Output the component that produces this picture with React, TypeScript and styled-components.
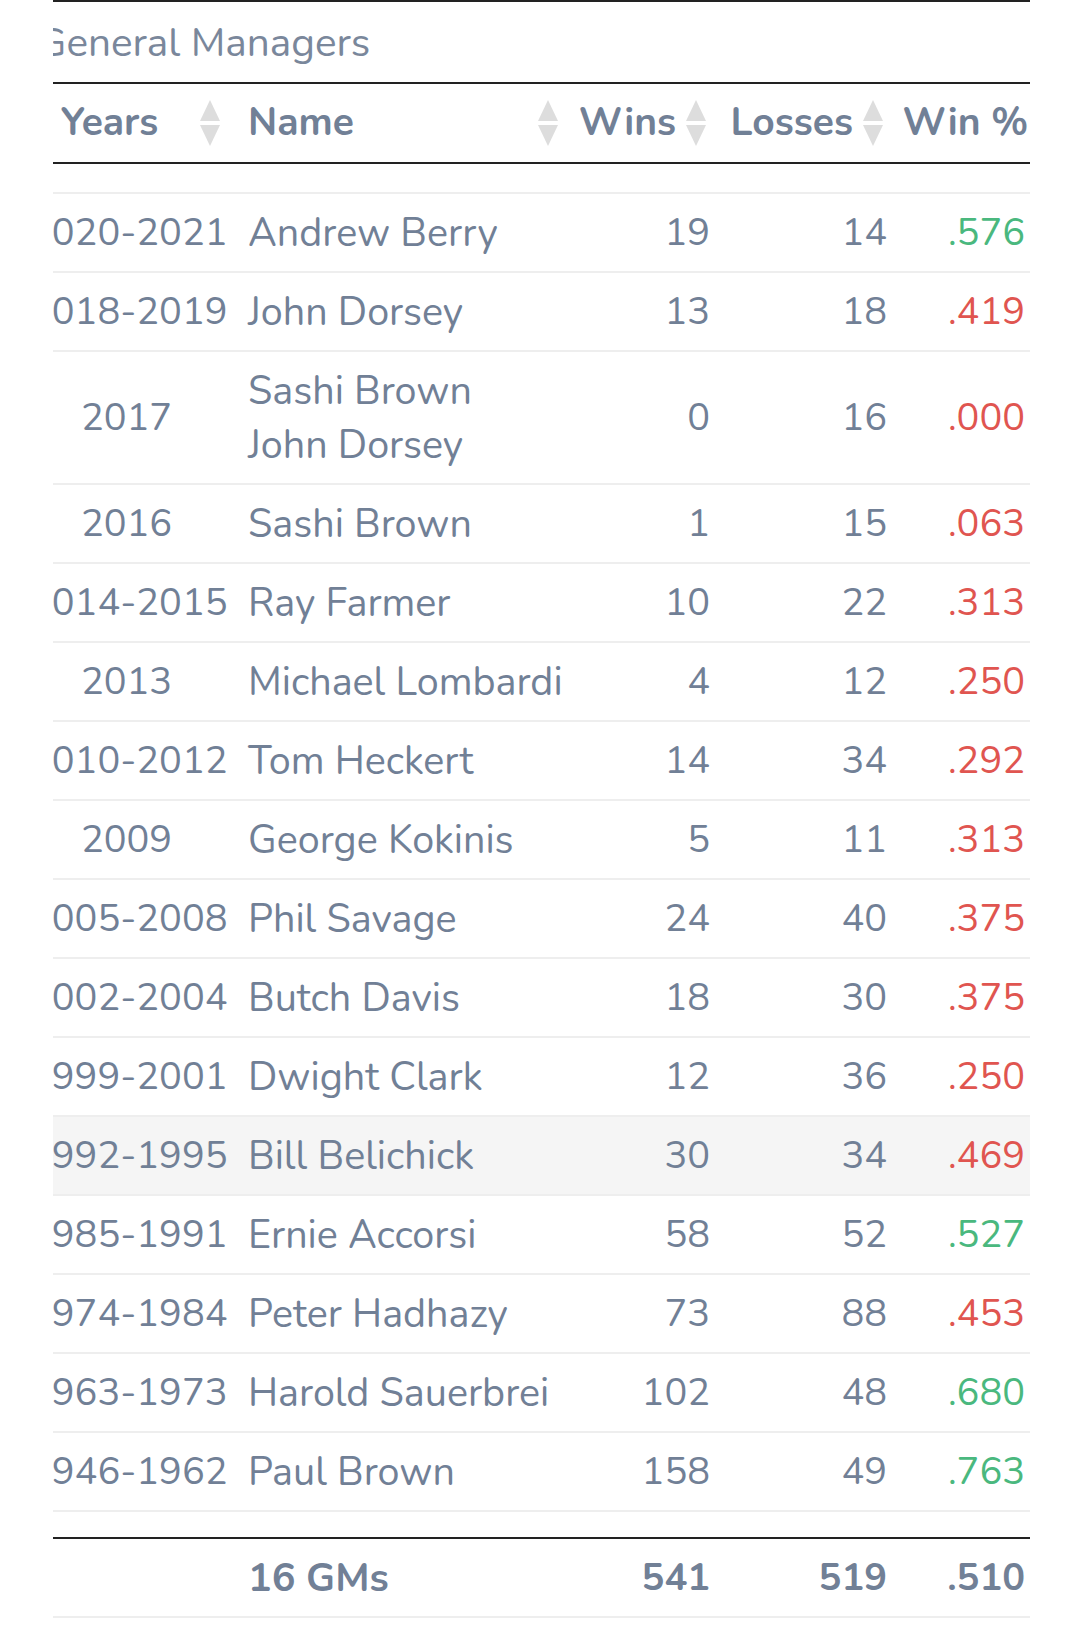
import React from 'react';
import styled, { createGlobalStyle } from 'styled-components';

const GlobalStyle = createGlobalStyle`
  html, body {
    margin: 0;
    padding: 0;
    background: #ffffff;
  }
  body {
    font-family: Nunito, "Noto Sans", "Open Sans", sans-serif;
    color: #718096;
  }
`;

const Page = styled.div`
  width: 1080px;
  padding: 0 50px 0 53px;
  box-sizing: border-box;
`;

// the table is wider than the card and is scrolled a little, so both ends are clipped
const Scroller = styled.div`
  overflow: hidden;
  width: 977px;
`;

const Inner = styled.div`
  width: 1020px;
  margin-left: -36px;
`;

const Caption = styled.div`
  border-top: 2px solid #222;
  height: 80px;
  display: flex;
  align-items: center;
  padding-left: 20px;
  font-size: 40.5px;
  color: #7a879b;
`;

const Table = styled.table`
  width: 1020px;
  border-collapse: collapse;
  table-layout: fixed;
  font-size: 38px;
  line-height: 54px;
`;

const HeadRow = styled.tr`
  border-top: 2px solid #222;
  border-bottom: 2px solid #222;
`;

const Th = styled.th<{ $w: number; $pr: number }>`
  width: ${p => p.$w}px;
  height: 80px;
  padding: 0 ${p => p.$pr}px 0 12px;
  box-sizing: border-box;
  font-size: 39px;
  font-weight: 700;
  color: #718096;
`;

const HeadInner = styled.div<{ $align: 'left' | 'center' | 'right' }>`
  display: flex;
  align-items: center;
  justify-content: ${p => (p.$align === 'right' ? 'flex-end' : 'space-between')};
  gap: 10px;
  span {
    flex: ${p => (p.$align === 'right' ? '0 0 auto' : '1')};
    text-align: ${p => p.$align};
  }
`;

const SpacerRow = styled.tr`
  height: 30px;
  border-bottom: 2px solid #eeeeee;
`;

const Row = styled.tr<{ $hl?: boolean }>`
  border-bottom: 2px solid #eeeeee;
  background: ${p => (p.$hl ? '#f5f5f5' : 'transparent')};
`;

const Td = styled.td<{ $align: 'left' | 'center' | 'right'; $color?: string; $bold?: boolean; $name?: boolean }>`
  padding: 12px 12px 11px;
  text-align: ${p => p.$align};
  white-space: nowrap;
  color: ${p => p.$color || '#718096'};
  font-weight: ${p => (p.$bold ? 700 : 400)};
  font-size: ${p => (p.$name ? '39.5px' : 'inherit')};
`;

const FootRow = styled.tr`
  border-top: 2px solid #222;
  border-bottom: 2px solid #eeeeee;
`;

const GapRow = styled.tr`
  height: 27px;
`;

const SortIcon = () => (
  <svg width="20" height="46" viewBox="0 0 20 46" style={{ flex: '0 0 auto' }}>
    <path d="M10 0 L20 21 L0 21 Z" fill="#dddddd" />
    <path d="M10 46 L20 25 L0 25 Z" fill="#dddddd" />
  </svg>
);

type GM = { years: string; names: string[]; w: number; l: number; pct: string };

const data: GM[] = [
  { years: '2020-2021', names: ['Andrew Berry'], w: 19, l: 14, pct: '.576' },
  { years: '2018-2019', names: ['John Dorsey'], w: 13, l: 18, pct: '.419' },
  { years: '2017', names: ['Sashi Brown', 'John Dorsey'], w: 0, l: 16, pct: '.000' },
  { years: '2016', names: ['Sashi Brown'], w: 1, l: 15, pct: '.063' },
  { years: '2014-2015', names: ['Ray Farmer'], w: 10, l: 22, pct: '.313' },
  { years: '2013', names: ['Michael Lombardi'], w: 4, l: 12, pct: '.250' },
  { years: '2010-2012', names: ['Tom Heckert'], w: 14, l: 34, pct: '.292' },
  { years: '2009', names: ['George Kokinis'], w: 5, l: 11, pct: '.313' },
  { years: '2005-2008', names: ['Phil Savage'], w: 24, l: 40, pct: '.375' },
  { years: '2002-2004', names: ['Butch Davis'], w: 18, l: 30, pct: '.375' },
  { years: '1999-2001', names: ['Dwight Clark'], w: 12, l: 36, pct: '.250' },
  { years: '1992-1995', names: ['Bill Belichick'], w: 30, l: 34, pct: '.469' },
  { years: '1985-1991', names: ['Ernie Accorsi'], w: 58, l: 52, pct: '.527' },
  { years: '1974-1984', names: ['Peter Hadhazy'], w: 73, l: 88, pct: '.453' },
  { years: '1963-1973', names: ['Harold Sauerbrei'], w: 102, l: 48, pct: '.680' },
  { years: '1946-1962', names: ['Paul Brown'], w: 158, l: 49, pct: '.763' },
];

const GREEN = '#4ab87e';
const RED = '#e05550';

export default function App() {
  return (
    <Page>
      <GlobalStyle />
      <Scroller>
        <Inner>
          <Caption>General Managers</Caption>
          <Table>
            <thead>
              <HeadRow>
                <Th $w={219} $pr={16}>
                  <HeadInner $align="center"><span>Years</span><SortIcon /></HeadInner>
                </Th>
                <Th $w={334} $pr={12}>
                  <HeadInner $align="left"><span>Name</span><SortIcon /></HeadInner>
                </Th>
                <Th $w={152} $pr={16}>
                  <HeadInner $align="right"><span>Wins</span><SortIcon /></HeadInner>
                </Th>
                <Th $w={177} $pr={16}>
                  <HeadInner $align="right"><span>Losses</span><SortIcon /></HeadInner>
                </Th>
                <Th $w={138} $pr={9}>
                  <HeadInner $align="right"><span>Win %</span></HeadInner>
                </Th>
              </HeadRow>
            </thead>
            <tbody>
              <SpacerRow><td colSpan={5} /></SpacerRow>
              {data.map(gm => (
                <Row key={gm.years} $hl={gm.years === '1992-1995'}>
                  <Td $align="center">{gm.years}</Td>
                  <Td $align="left" $name>
                    {gm.names.map(n => (
                      <div key={n}>{n}</div>
                    ))}
                  </Td>
                  <Td $align="right">{gm.w}</Td>
                  <Td $align="right">{gm.l}</Td>
                  <Td $align="right" $color={parseFloat(gm.pct) >= 0.5 ? GREEN : RED}>{gm.pct}</Td>
                </Row>
              ))}
            </tbody>
            <tfoot>
              <GapRow><td colSpan={5} /></GapRow>
              <FootRow>
                <Td $align="center" />
                <Td $align="left" $bold $name>16 GMs</Td>
                <Td $align="right" $bold>541</Td>
                <Td $align="right" $bold>519</Td>
                <Td $align="right" $bold>.510</Td>
              </FootRow>
            </tfoot>
          </Table>
        </Inner>
      </Scroller>
    </Page>
  );
}
